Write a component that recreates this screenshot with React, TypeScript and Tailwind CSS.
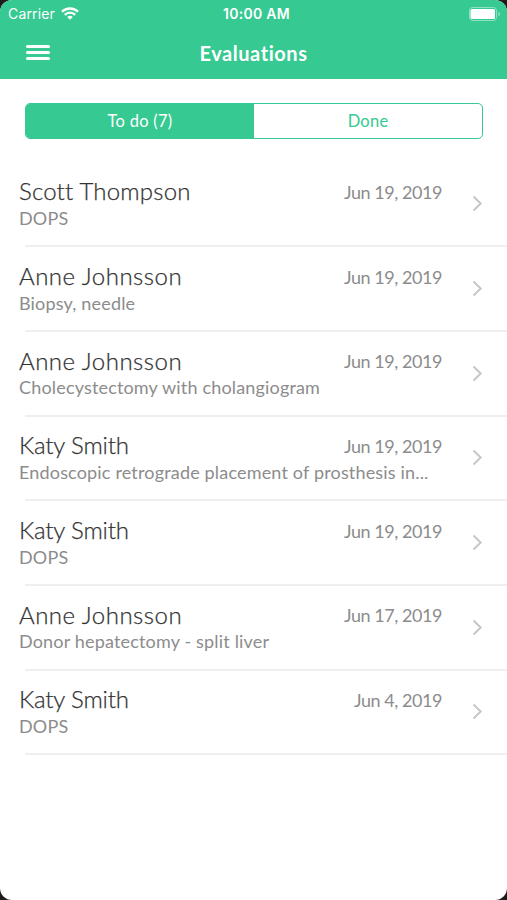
import React, { useState } from 'react';

interface Evaluation {
  id: number;
  name: string;
  tracking: string;
  procedure: string;
  date: string;
}

const evaluations: Evaluation[] = [
  { id: 1, name: 'Scott Thompson', tracking: 'tracking-[0.2px]', procedure: 'DOPS', date: 'Jun 19, 2019' },
  { id: 2, name: 'Anne Johnsson', tracking: 'tracking-[0.5px]', procedure: 'Biopsy, needle', date: 'Jun 19, 2019' },
  { id: 3, name: 'Anne Johnsson', tracking: 'tracking-[0.5px]', procedure: 'Cholecystectomy with cholangiogram', date: 'Jun 19, 2019' },
  { id: 4, name: 'Katy Smith', tracking: 'tracking-[-0.15px]', procedure: 'Endoscopic retrograde placement of prosthesis in...', date: 'Jun 19, 2019' },
  { id: 5, name: 'Katy Smith', tracking: 'tracking-[-0.15px]', procedure: 'DOPS', date: 'Jun 19, 2019' },
  { id: 6, name: 'Anne Johnsson', tracking: 'tracking-[0.5px]', procedure: 'Donor hepatectomy - split liver', date: 'Jun 17, 2019' },
  { id: 7, name: 'Katy Smith', tracking: 'tracking-[-0.15px]', procedure: 'DOPS', date: 'Jun 4, 2019' },
];

const WifiIcon = () => (
  <svg className="w-[18px] h-[13px]" viewBox="0 0 18 13" fill="none" stroke="white" strokeWidth="2.3">
    <path d="M1 4.8a11.3 11.3 0 0 1 16 0" />
    <path d="M3.8 7.9a7.3 7.3 0 0 1 10.4 0" />
    <path d="M9 12.8 6.2 10a4 4 0 0 1 5.6 0Z" fill="white" stroke="none" />
  </svg>
);

const BatteryIcon = () => (
  <svg className="w-[32px] h-[14px]" viewBox="0 0 32 14" fill="none">
    <rect x="0.5" y="0.5" width="27" height="13" rx="3" stroke="white" strokeOpacity="0.45" />
    <rect x="1.5" y="2" width="24.5" height="10" rx="1.5" fill="white" />
    <path d="M29.3 5v4c1-.4 1.6-1.1 1.6-2s-.6-1.6-1.6-2Z" fill="white" fillOpacity="0.5" />
  </svg>
);

const ChevronIcon = () => (
  <svg className="w-[11px] h-[17px]" viewBox="0 0 11 17" fill="none" stroke="#c7c7c7" strokeWidth="2">
    <path d="M1.5 1.5 8.7 8.5 1.5 15.5" />
  </svg>
);

const Header = () => (
  <header className="h-[79px] bg-[#36c991] text-white">
    <div className="h-[27px] px-2 grid grid-cols-3 items-center">
      <div className="flex items-center gap-[6px]">
        <span className="font-['Inter',sans-serif] text-[14px] tracking-[0.15px]">Carrier</span>
        <WifiIcon />
      </div>
      <span className="pl-[6px] text-center font-['Inter',sans-serif] text-[14px] font-semibold tracking-[0.3px]">10:00 AM</span>
      <div className="flex justify-end -mr-[2px]">
        <BatteryIcon />
      </div>
    </div>
    <div className="h-[50px] px-[26px] grid grid-cols-3 items-center">
      <button className="w-6 flex flex-col gap-[3px]">
        <span className="h-[3px] rounded-full bg-white" />
        <span className="h-[3px] rounded-full bg-white" />
        <span className="h-[3px] rounded-full bg-white" />
      </button>
      <h1 className="pt-px text-center text-[20px] font-bold tracking-[0.55px] whitespace-nowrap">Evaluations</h1>
    </div>
  </header>
);

const EvaluationRow: React.FC<{ evaluation: Evaluation }> = ({ evaluation }) => (
  <li className="h-[84.7px] flex flex-col">
    <div className="flex-1 flex items-center pl-[19px] pr-[24px]">
      <div className="flex-1 min-w-0 pb-px">
        <div className="flex items-center justify-between pr-[30px] h-[29px]">
          <span className={`text-[24px] font-light text-[#333333] [-webkit-text-stroke:0.25px_#333333] whitespace-nowrap ${evaluation.tracking}`}>{evaluation.name}</span>
          <span className="pt-[2px] text-[18px] tracking-[-0.45px] text-[#8c8c8c] whitespace-nowrap">{evaluation.date}</span>
        </div>
        <p className="text-[18px] leading-[24px] tracking-[0.17px] text-[#8c8c8c] whitespace-nowrap">{evaluation.procedure}</p>
      </div>
      <ChevronIcon />
    </div>
    <div className="ml-[25px] h-[2px] bg-[#efefef]" />
  </li>
);

const App = () => {
  const [tab, setTab] = useState<'todo' | 'done'>('todo');

  return (
    <div className="h-[900px] bg-[#1c1c1c]">
      <div className="h-full overflow-hidden rounded-[12px] bg-white font-['Lato',sans-serif] [font-variant-ligatures:none]">
        <Header />
        <div className="ml-[25px] mr-[24px] mt-6 h-[35.5px] flex overflow-hidden rounded-[5px] border border-[#36c991] text-[16.5px] tracking-[0.25px]">
          <button
            onClick={() => setTab('todo')}
            className={tab === 'todo' ? 'flex-1 pt-[2px] bg-[#36c991] text-white' : 'flex-1 pt-[2px] text-[#36c991]'}
          >
            To do (7)
          </button>
          <button
            onClick={() => setTab('done')}
            className={tab === 'done' ? 'flex-1 pt-[2px] bg-[#36c991] text-white' : 'flex-1 pt-[2px] text-[#36c991]'}
          >
            Done
          </button>
        </div>
        <ul className="mt-[24px]">
          {evaluations.map((evaluation) => (
            <EvaluationRow key={evaluation.id} evaluation={evaluation} />
          ))}
        </ul>
      </div>
    </div>
  );
};

export default App;
